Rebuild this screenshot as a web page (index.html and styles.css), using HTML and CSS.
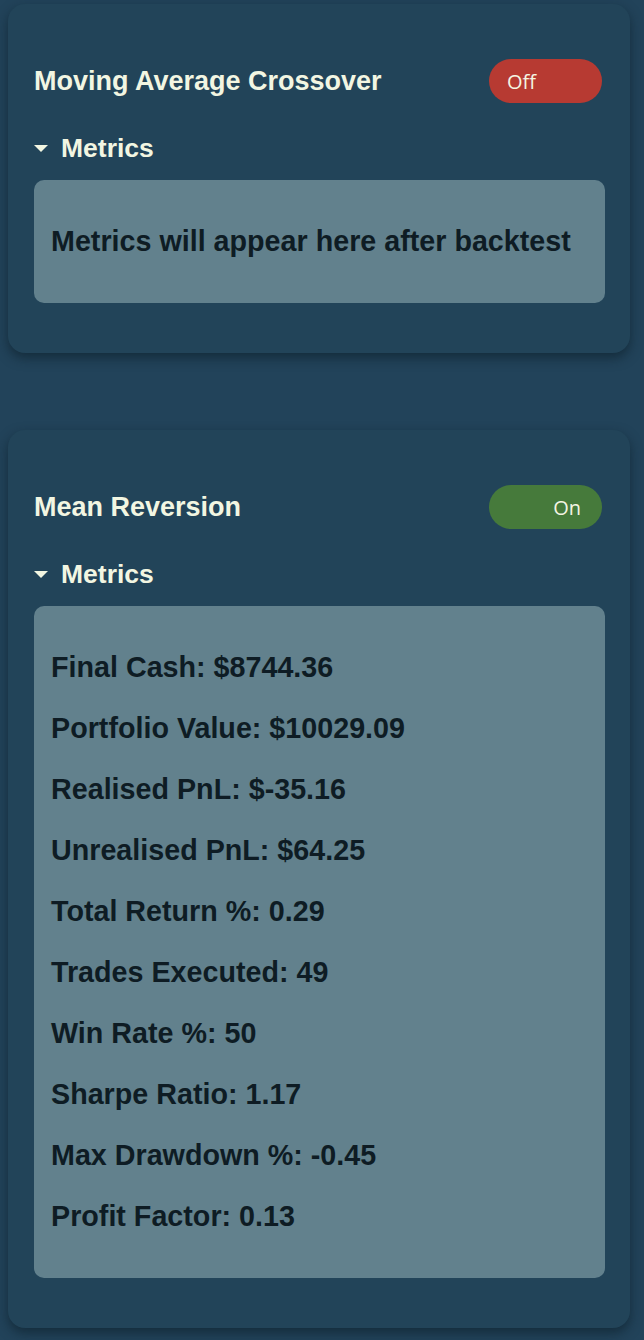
FILE: index.html
```html
<!DOCTYPE html>
<html lang="en">
<head>
<meta charset="utf-8">
<title>Strategies</title>
<link rel="stylesheet" href="styles.css">
</head>
<body>
<main class="page">
  <section class="card">
    <header class="card-head">
      <h2 class="card-title">Moving Average Crossover</h2>
      <button class="toggle toggle-off" type="button">Off</button>
    </header>
    <div class="metrics-head"><span class="tri"></span><span>Metrics</span></div>
    <div class="metrics-box">
      <p class="metric">Metrics will appear here after backtest</p>
    </div>
  </section>

  <section class="card">
    <header class="card-head">
      <h2 class="card-title">Mean Reversion</h2>
      <button class="toggle toggle-on" type="button">On</button>
    </header>
    <div class="metrics-head"><span class="tri"></span><span>Metrics</span></div>
    <div class="metrics-box">
      <p class="metric">Final Cash: $8744.36</p>
      <p class="metric">Portfolio Value: $10029.09</p>
      <p class="metric">Realised PnL: $-35.16</p>
      <p class="metric">Unrealised PnL: $64.25</p>
      <p class="metric">Total Return %: 0.29</p>
      <p class="metric">Trades Executed: 49</p>
      <p class="metric">Win Rate %: 50</p>
      <p class="metric">Sharpe Ratio: 1.17</p>
      <p class="metric">Max Drawdown %: -0.45</p>
      <p class="metric">Profit Factor: 0.13</p>
    </div>
  </section>
</main>
</body>
</html>
```

FILE: styles.css
```css
html, body {
  margin: 0;
  padding: 0;
  background: #22435a;
}

body {
  font-family: "Liberation Sans", Arial, sans-serif;
}

.page {
  display: flex;
  flex-direction: column;
  gap: 77px;
  padding: 4px 14px 12px 8px;
}

.card {
  background: #224459;
  border-radius: 17px;
  box-shadow: 0 5px 12px rgba(10, 25, 35, 0.55);
  padding: 55px 25px 50px 26px;
  display: flex;
  flex-direction: column;
}

.card-head {
  display: flex;
  align-items: center;
  justify-content: space-between;
  height: 44px;
}

.card-title {
  margin: 0;
  font-size: 27px;
  font-weight: 700;
  color: #f2f6e2;
  line-height: 31px;
}

.toggle {
  width: 113px;
  height: 44px;
  border: none;
  border-radius: 22px;
  margin-right: 3px;
  font-family: "Open Sans", "Noto Sans", sans-serif;
  font-size: 20px;
  color: #f4f4e2;
  display: flex;
  align-items: center;
  padding: 0;
}

.toggle-off {
  background: #b73a32;
  justify-content: flex-start;
  padding-left: 18px;
}

.toggle-on {
  background: #467a3b;
  justify-content: flex-end;
  padding-right: 21px;
}

.metrics-head {
  display: flex;
  align-items: center;
  gap: 13px;
  margin-top: 30px;
  font-size: 26.5px;
  font-weight: 700;
  line-height: 31px;
  color: #f2f6e2;
}

.tri {
  width: 0;
  height: 0;
  border-left: 7px solid transparent;
  border-right: 7px solid transparent;
  border-top: 7px solid #f2f6e2;
}

.metrics-box {
  margin-top: 16px;
  background: #62818d;
  border-radius: 10px;
  padding: 46px 17px;
  display: flex;
  flex-direction: column;
  gap: 30px;
}

.metric {
  margin: 0;
  font-size: 28.7px;
  font-weight: 700;
  line-height: 31px;
  color: #0e1c24;
}
```
